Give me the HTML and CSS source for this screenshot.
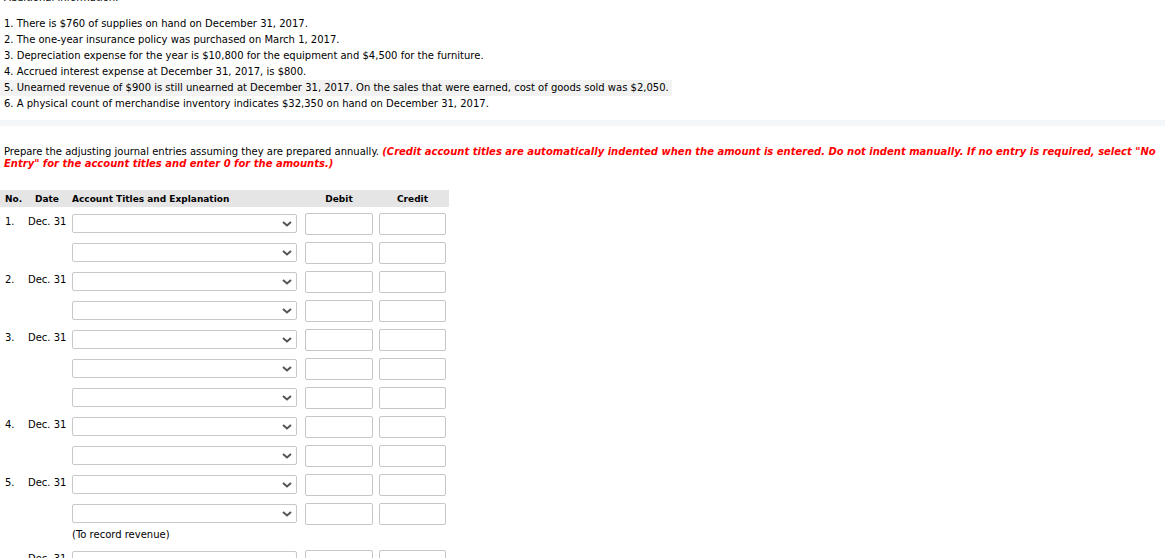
FILE: index.html
```html
<!DOCTYPE html>
<html>
<head>
<meta charset="utf-8">
<link rel="stylesheet" href="styles.css">
</head>
<body>
<div class="info">
  <p class="info-title">Additional information:</p>
  <ol class="facts">
    <li>1. There is $760 of supplies on hand on December 31, 2017.</li>
    <li>2. The one-year insurance policy was purchased on March 1, 2017.</li>
    <li>3. Depreciation expense for the year is $10,800 for the equipment and $4,500 for the furniture.</li>
    <li>4. Accrued interest expense at December 31, 2017, is $800.</li>
    <li class="hover">5. Unearned revenue of $900 is still unearned at December 31, 2017. On the sales that were earned, cost of goods sold was $2,050.</li>
    <li>6. A physical count of merchandise inventory indicates $32,350 on hand on December 31, 2017.</li>
  </ol>
</div>
<div class="band"></div>
<p class="prompt">Prepare the adjusting journal entries assuming they are prepared annually. <em class="warn">(Credit account titles are automatically indented when the amount is entered. Do not indent manually. If no entry is required, select "No Entry" for the account titles and enter 0 for the amounts.)</em></p>

<div class="journal">
  <div class="head">
    <span class="h-no">No.</span>
    <span class="h-date">Date</span>
    <span class="h-acct">Account Titles and Explanation</span>
    <span class="h-debit">Debit</span>
    <span class="h-credit">Credit</span>
  </div>

  <div class="row"><span class="no">1.</span><span class="date">Dec. 31</span><span class="sel"><svg class="chev" width="10" height="6" viewBox="0 0 10 6"><polyline points="1,1 5,4.5 9,1" fill="none" stroke="#555" stroke-width="2"/></svg></span><span class="amt"></span><span class="amt cr"></span></div>
  <div class="row"><span class="no"></span><span class="date"></span><span class="sel"><svg class="chev" width="10" height="6" viewBox="0 0 10 6"><polyline points="1,1 5,4.5 9,1" fill="none" stroke="#555" stroke-width="2"/></svg></span><span class="amt"></span><span class="amt cr"></span></div>

  <div class="row"><span class="no">2.</span><span class="date">Dec. 31</span><span class="sel"><svg class="chev" width="10" height="6" viewBox="0 0 10 6"><polyline points="1,1 5,4.5 9,1" fill="none" stroke="#555" stroke-width="2"/></svg></span><span class="amt"></span><span class="amt cr"></span></div>
  <div class="row"><span class="no"></span><span class="date"></span><span class="sel"><svg class="chev" width="10" height="6" viewBox="0 0 10 6"><polyline points="1,1 5,4.5 9,1" fill="none" stroke="#555" stroke-width="2"/></svg></span><span class="amt"></span><span class="amt cr"></span></div>

  <div class="row"><span class="no">3.</span><span class="date">Dec. 31</span><span class="sel"><svg class="chev" width="10" height="6" viewBox="0 0 10 6"><polyline points="1,1 5,4.5 9,1" fill="none" stroke="#555" stroke-width="2"/></svg></span><span class="amt"></span><span class="amt cr"></span></div>
  <div class="row"><span class="no"></span><span class="date"></span><span class="sel"><svg class="chev" width="10" height="6" viewBox="0 0 10 6"><polyline points="1,1 5,4.5 9,1" fill="none" stroke="#555" stroke-width="2"/></svg></span><span class="amt"></span><span class="amt cr"></span></div>
  <div class="row"><span class="no"></span><span class="date"></span><span class="sel"><svg class="chev" width="10" height="6" viewBox="0 0 10 6"><polyline points="1,1 5,4.5 9,1" fill="none" stroke="#555" stroke-width="2"/></svg></span><span class="amt"></span><span class="amt cr"></span></div>

  <div class="row"><span class="no">4.</span><span class="date">Dec. 31</span><span class="sel"><svg class="chev" width="10" height="6" viewBox="0 0 10 6"><polyline points="1,1 5,4.5 9,1" fill="none" stroke="#555" stroke-width="2"/></svg></span><span class="amt"></span><span class="amt cr"></span></div>
  <div class="row"><span class="no"></span><span class="date"></span><span class="sel"><svg class="chev" width="10" height="6" viewBox="0 0 10 6"><polyline points="1,1 5,4.5 9,1" fill="none" stroke="#555" stroke-width="2"/></svg></span><span class="amt"></span><span class="amt cr"></span></div>

  <div class="row"><span class="no">5.</span><span class="date">Dec. 31</span><span class="sel"><svg class="chev" width="10" height="6" viewBox="0 0 10 6"><polyline points="1,1 5,4.5 9,1" fill="none" stroke="#555" stroke-width="2"/></svg></span><span class="amt"></span><span class="amt cr"></span></div>
  <div class="row"><span class="no"></span><span class="date"></span><span class="sel"><svg class="chev" width="10" height="6" viewBox="0 0 10 6"><polyline points="1,1 5,4.5 9,1" fill="none" stroke="#555" stroke-width="2"/></svg></span><span class="amt"></span><span class="amt cr"></span></div>
  <div class="note">(To record revenue)</div>

  <div class="row"><span class="no"></span><span class="date">Dec. 31</span><span class="sel"><svg class="chev" width="10" height="6" viewBox="0 0 10 6"><polyline points="1,1 5,4.5 9,1" fill="none" stroke="#555" stroke-width="2"/></svg></span><span class="amt"></span><span class="amt cr"></span></div>
</div>
</body>
</html>
```
FILE: styles.css
```css
html, body {
  margin: 0;
  padding: 0;
  background: #ffffff;
  overflow: hidden;
}
body {
  font-family: "DejaVu Sans", Verdana, sans-serif;
  font-size: 10px;
  color: #000000;
  width: 1165px;
  height: 558px;
}
.info-title {
  margin: -10px 0 0 4px;
  line-height: 16px;
}
.facts {
  list-style: none;
  margin: 10px 0 0 0;
  padding: 0;
}
.facts li {
  line-height: 16px;
  padding: 0 3px 0 4px;
  width: fit-content;
}
.facts li.hover {
  background: #f2f2f2;
}
.band {
  margin-top: 8px;
  height: 6px;
  background: #f4f7fa;
}
.prompt {
  margin: 20px 0 0 0;
  padding: 0 4px;
  line-height: 12px;
}
.warn {
  color: #ff0000;
  font-weight: bold;
  font-style: italic;
}
.journal {
  margin-top: 20px;
  width: 449px;
}
.head {
  display: flex;
  align-items: center;
  height: 17px;
  background: #e5e5e5;
  font-weight: bold;
  font-size: 9px;
}
.h-no { width: 35px; padding-left: 5px; box-sizing: border-box; }
.h-date { width: 37px; }
.h-acct { width: 233px; }
.h-debit { width: 68px; text-align: center; }
.h-credit { width: 67px; text-align: center; margin-left: 6px; }
.row {
  display: flex;
  align-items: flex-start;
  height: 29px;
  padding-top: 6px;
  box-sizing: border-box;
}
.no {
  width: 23px;
  padding-left: 5px;
  line-height: 18px;
}
.date {
  width: 44px;
  line-height: 18px;
}
.sel {
  width: 225px;
  height: 19px;
  margin-top: 1px;
  border: 1px solid #c8c8c8;
  border-radius: 2px;
  box-sizing: border-box;
  background: #ffffff;
  display: flex;
  align-items: center;
  justify-content: flex-end;
  padding-right: 4px;
}
.chev {
  display: block;
}
.amt {
  width: 68px;
  height: 22px;
  margin-left: 8px;
  border: 1px solid #c6c6c6;
  border-radius: 2px;
  box-sizing: border-box;
  background: #ffffff;
}
.amt.cr {
  width: 67px;
  margin-left: 6px;
}
.note {
  padding-left: 72px;
  line-height: 18px;
}
```
